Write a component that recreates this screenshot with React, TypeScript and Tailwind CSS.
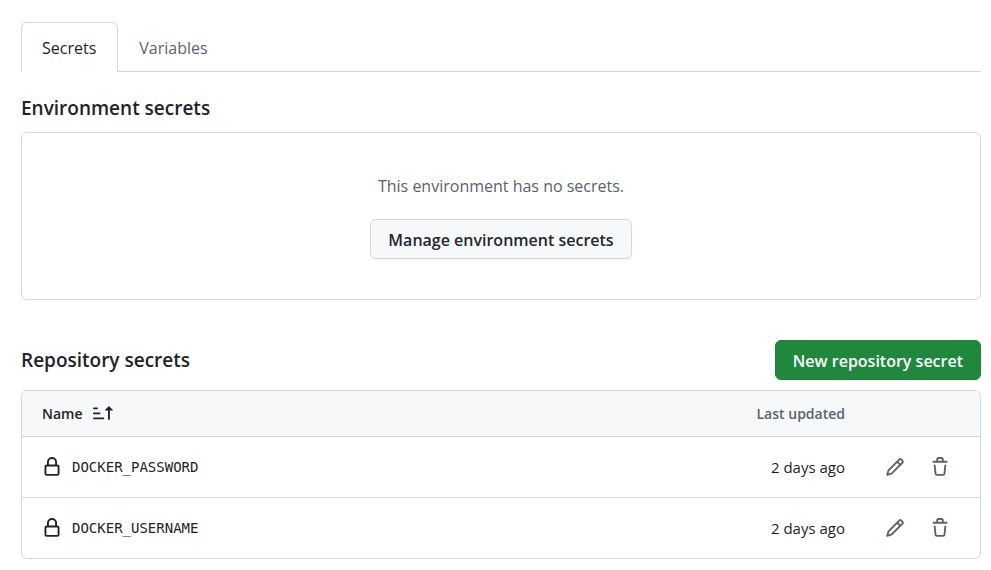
import type { ReactNode } from "react";

function Icon({ children }: { children: ReactNode }) {
  return (
    <svg viewBox="0 0 16 16" fill="currentColor" aria-hidden="true" className="size-5 shrink-0">
      {children}
    </svg>
  );
}

function LockIcon() {
  return (
    <Icon>
      <path d="M4 4a4 4 0 0 1 8 0v2h.25c.966 0 1.75.784 1.75 1.75v5.5A1.75 1.75 0 0 1 12.25 15h-8.5A1.75 1.75 0 0 1 2 13.25v-5.5C2 6.784 2.784 6 3.75 6H4Zm8.25 3.5h-8.5a.25.25 0 0 0-.25.25v5.5c0 .138.112.25.25.25h8.5a.25.25 0 0 0 .25-.25v-5.5a.25.25 0 0 0-.25-.25ZM10.5 6V4a2.5 2.5 0 1 0-5 0v2Z" />
    </Icon>
  );
}

function PencilIcon() {
  return (
    <Icon>
      <path d="M11.013 1.427a1.75 1.75 0 0 1 2.474 0l1.086 1.086a1.75 1.75 0 0 1 0 2.474l-8.61 8.61c-.21.21-.47.364-.756.445l-3.251.93a.75.75 0 0 1-.927-.928l.929-3.25c.081-.286.235-.547.445-.758l8.61-8.61Zm.176 4.823L9.75 4.81l-6.286 6.287a.253.253 0 0 0-.064.108l-.558 1.953 1.953-.558a.253.253 0 0 0 .108-.064Zm1.238-3.763a.25.25 0 0 0-.354 0L10.811 3.75l1.439 1.44 1.263-1.263a.25.25 0 0 0 0-.354Z" />
    </Icon>
  );
}

function TrashIcon() {
  return (
    <Icon>
      <path d="M11 1.75V3h2.25a.75.75 0 0 1 0 1.5H2.75a.75.75 0 0 1 0-1.5H5V1.75C5 .784 5.784 0 6.75 0h2.5C10.216 0 11 .784 11 1.75ZM4.496 6.675l.66 6.6a.25.25 0 0 0 .249.225h5.19a.25.25 0 0 0 .249-.225l.66-6.6a.75.75 0 0 1 1.492.149l-.66 6.6A1.748 1.748 0 0 1 10.595 15h-5.19a1.75 1.75 0 0 1-1.741-1.575l-.66-6.6a.75.75 0 1 1 1.492-.15ZM6.5 1.75V3h3V1.75a.25.25 0 0 0-.25-.25h-2.5a.25.25 0 0 0-.25.25Z" />
    </Icon>
  );
}

function SortAscIcon() {
  return (
    <Icon>
      <path d="m12.927 2.573 3 3A.25.25 0 0 1 15.75 6H13.5v6.75a.75.75 0 0 1-1.5 0V6H9.75a.25.25 0 0 1-.177-.427l3-3a.25.25 0 0 1 .354 0ZM0 12.25a.75.75 0 0 1 .75-.75h7.5a.75.75 0 0 1 0 1.5H.75a.75.75 0 0 1-.75-.75Zm0-4a.75.75 0 0 1 .75-.75h4.5a.75.75 0 0 1 0 1.5H.75A.75.75 0 0 1 0 8.25Zm0-4a.75.75 0 0 1 .75-.75h2.5a.75.75 0 0 1 0 1.5H.75A.75.75 0 0 1 0 4.25Z" />
    </Icon>
  );
}

const secrets = [
  { name: "DOCKER_PASSWORD", updated: "2 days ago" },
  { name: "DOCKER_USERNAME", updated: "2 days ago" },
];

export default function App() {
  return (
    <main className="bg-white pt-[22px] pr-2.5 pb-3 pl-[21px] font-['Open_Sans','Noto_Sans',sans-serif] text-[#1f2328]">
      <nav aria-label="Secrets and variables" className="flex h-[50px] border-b border-[#d1d9e0] text-base">
        <a
          href="#secrets"
          aria-current="page"
          className="-mb-px flex items-center rounded-t-md border border-b-0 border-[#d1d9e0] bg-white pr-[21px] pl-5"
        >
          Secrets
        </a>
        <a href="#variables" className="flex items-center border-t border-transparent px-[21px] pt-px text-[#59636e]">
          Variables
        </a>
      </nav>

      <section className="mt-6">
        <h2 className="text-[19px] leading-6 font-semibold">Environment secrets</h2>
        <div className="mt-3 flex flex-col items-center gap-5 rounded-md border border-[#d1d9e0] py-10">
          <p className="text-base leading-[26px] text-[#59636e]">This environment has no secrets.</p>
          <button
            type="button"
            className="h-10 rounded-md border border-[#d1d9e0] bg-[#f6f8fa] px-[17px] pt-0.5 text-base font-semibold text-[#25292e] shadow-xs"
          >
            Manage environment secrets
          </button>
        </div>
      </section>

      <section className="mt-10">
        <div className="flex items-center justify-between">
          <h2 className="text-[19px] leading-6 font-semibold">Repository secrets</h2>
          <button
            type="button"
            className="h-10 rounded-md border border-[#1c8139] bg-[#1f883d] px-[17px] pt-0.5 text-base font-semibold text-white shadow-xs"
          >
            New repository secret
          </button>
        </div>

        <div className="mt-2.5 overflow-hidden rounded-md border border-[#d1d9e0]">
          <table className="w-full text-left text-[14px]">
            <thead className="bg-[#f6f8fa]">
              <tr className="h-[45px]">
                <th scope="col" aria-sort="ascending" className="pl-5 font-semibold">
                  <button type="button" className="flex items-center gap-2.5">
                    Name
                    <SortAscIcon />
                  </button>
                </th>
                <th scope="col" className="text-right font-semibold text-[#59636e]">
                  Last updated
                </th>
                <th scope="col" className="w-[135px]" aria-label="Actions" />
              </tr>
            </thead>
            <tbody>
              {secrets.map((secret) => (
                <tr key={secret.name} className="h-[61px] border-t border-[#d1d9e0]">
                  <td className="pl-5">
                    <div className="flex items-center gap-2.5">
                      <LockIcon />
                      <code className="pt-px font-['DejaVu_Sans_Mono',monospace] text-[14px]">{secret.name}</code>
                    </div>
                  </td>
                  <td className="pt-px text-right text-[15px]">{secret.updated}</td>
                  <td className="pr-5">
                    <div className="flex justify-end gap-[5px] text-[#59636e]">
                      <button
                        type="button"
                        aria-label={`Edit ${secret.name}`}
                        className="flex size-10 items-center justify-center rounded-md"
                      >
                        <PencilIcon />
                      </button>
                      <button
                        type="button"
                        aria-label={`Remove ${secret.name}`}
                        className="flex size-10 items-center justify-center rounded-md"
                      >
                        <TrashIcon />
                      </button>
                    </div>
                  </td>
                </tr>
              ))}
            </tbody>
          </table>
        </div>
      </section>
    </main>
  );
}
